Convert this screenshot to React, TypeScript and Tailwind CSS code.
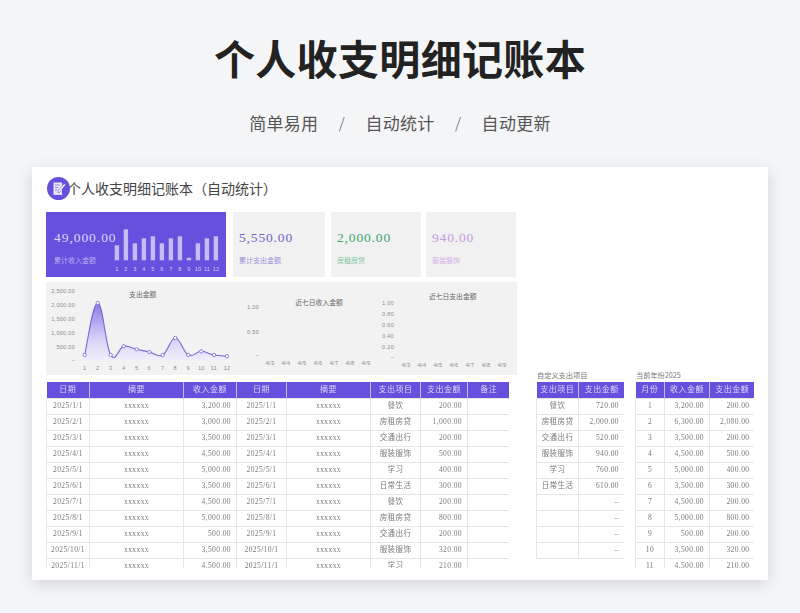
import React from "react";

const SANS = "font-['Noto_Sans_CJK_SC','Noto_Sans',sans-serif]";
const SERIF = "font-['Liberation_Serif','Noto_Sans_CJK_SC',serif]";

function DataTable({
  widths,
  headers,
  rows,
  aligns,
  noRight,
}: {
  widths: number[];
  headers: string[];
  rows: string[][];
  aligns: string[];
  noRight?: boolean;
}) {
  const total = widths.reduce((a, b) => a + b, 0);
  return (
    <div className="h-[186px] overflow-hidden shrink-0 will-change-transform" style={{ width: total }}>
      <table className={`table-fixed border-collapse w-full ${SERIF} text-[7.5px] tracking-[0.4px] text-[#7a7a7a]`}>
        <colgroup>
          {widths.map((w, i) => (
            <col key={i} style={{ width: w }} />
          ))}
        </colgroup>
        <thead>
          <tr className="h-[16px] bg-[#6750dd] text-[8px] text-[#dcd7fa] tracking-[0.5px]">
            {headers.map((h, i) => (
              <th key={i} className="font-normal p-0 border-r border-[#c3baf3] last:border-r-0">
                {h}
              </th>
            ))}
          </tr>
        </thead>
        <tbody>
          {rows.map((r, ri) => (
            <tr key={ri} className="h-[16px]">
              {r.map((c, ci) => (
                <td
                  key={ci}
                  className={`p-0 border border-[#e6e6e6] leading-none ${
                    aligns[ci] === "r" ? "text-right pr-[5px]" : "text-center"
                  } ${noRight && ci === r.length - 1 ? "border-r-0" : ""}`}
                >
                  {c}
                </td>
              ))}
            </tr>
          ))}
        </tbody>
      </table>
    </div>
  );
}

function Kpi({ value, label, w, valueCls, labelCls }: { value: string; label: string; w: string; valueCls: string; labelCls: string }) {
  return (
    <div className={`${w} h-[65px] bg-[#f1f1f1] pl-[6px] pt-[18px] shrink-0`}>
      <div className={`${SERIF} text-[13.5px] leading-[16px] tracking-[0.85px] ${valueCls}`}>{value}</div>
      <div className={`${SANS} text-[7px] leading-[10px] mt-[9px] ${labelCls}`}>{label}</div>
    </div>
  );
}

const barHeights = [15, 31, 17, 22, 24, 17, 22, 24, 2.5, 17, 22, 24];

function MiniBars() {
  return (
    <svg width="108" height="65" className="absolute left-[66px] top-0">
      {barHeights.map((h, i) => (
        <g key={i}>
          <rect x={2.7 + i * 9} y={48.3 - h} width="4.4" height={h} fill="#c5bcf6" />
          <text x={4.9 + i * 9} y={58.5} fontSize="5.5" textAnchor="middle" fill="#d6d0f9" fontFamily="Liberation Sans, sans-serif">
            {i + 1}
          </text>
        </g>
      ))}
    </svg>
  );
}

const pts: [number, number][] = [
  [38.7, 73], [51.7, 21], [64.7, 73], [77.7, 64.3], [90.7, 67.3], [103.3, 70],
  [116.7, 73], [129.3, 56], [142.3, 73], [155.3, 69.3], [168, 73], [181, 74.3],
];

function smooth(p: [number, number][]) {
  let d = `M${p[0][0]} ${p[0][1]}`;
  for (let i = 0; i < p.length - 1; i++) {
    const p0 = p[Math.max(0, i - 1)];
    const p1 = p[i];
    const p2 = p[i + 1];
    const p3 = p[Math.min(p.length - 1, i + 2)];
    const k = 0.2;
    const c1x = p1[0] + (p2[0] - p0[0]) * k;
    const c1y = p1[1] + (p2[1] - p0[1]) * k;
    const c2x = p2[0] - (p3[0] - p1[0]) * k;
    const c2y = p2[1] - (p3[1] - p1[1]) * k;
    d += ` C${c1x.toFixed(1)} ${c1y.toFixed(1)} ${c2x.toFixed(1)} ${c2y.toFixed(1)} ${p2[0]} ${p2[1]}`;
  }
  return d;
}

const AX = { fontFamily: "Liberation Sans, sans-serif", fontSize: 5.6, fill: "#8a8a8a", letterSpacing: 0.25 };
const TT = { fontFamily: "Noto Sans CJK SC, sans-serif", fontSize: 6.8, fill: "#666", textAnchor: "middle" as const };

function SpendChart() {
  const line = smooth(pts);
  const yl: [string, number][] = [["2,500.00", 11], ["2,000.00", 25], ["1,500.00", 39], ["1,000.00", 52.7], ["500.00", 66.7], ["–", 80]];
  return (
    <svg width="190" height="93" className="shrink-0">
      <defs>
        <linearGradient id="ar" x1="0" y1="0" x2="0" y2="1">
          <stop offset="0" stopColor="#8b7be9" />
          <stop offset="0.65" stopColor="#d9d4f7" />
          <stop offset="1" stopColor="#f0eefb" />
        </linearGradient>
      </defs>
      <text x="96.7" y="15" {...TT}>支出金额</text>
      {yl.map(([t, y]) => (
        <text key={t} x="29" y={y} textAnchor="end" {...AX}>{t}</text>
      ))}
      <path d={`${line} L181 78 L38.7 78 Z`} fill="url(#ar)" />
      <path d={line} fill="none" stroke="#7767d3" strokeWidth="1.1" />
      {pts.map(([x, y], i) => (
        <g key={i}>
          <circle cx={x} cy={y} r="1.7" fill="#fff" stroke="#7767d3" strokeWidth="0.8" />
          <text x={x} y="88" textAnchor="middle" {...AX}>{i + 1}</text>
        </g>
      ))}
    </svg>
  );
}

const days = ["4/3", "4/4", "4/5", "4/6", "4/7", "4/8", "4/9"];

function IncomeWeek() {
  return (
    <svg width="142" height="93" className="shrink-0">
      <text x="83" y="22.5" {...TT}>近七日收入金额</text>
      <text x="23" y="27" textAnchor="end" {...AX}>1.00</text>
      <text x="23" y="52" textAnchor="end" {...AX}>0.50</text>
      <text x="23" y="75" textAnchor="end" {...AX}>–</text>
      {days.map((d, i) => (
        <text key={d} x={34 + i * 16} y="83" textAnchor="middle" {...AX}>{d}</text>
      ))}
    </svg>
  );
}

function SpendWeek() {
  const yl: [string, number][] = [["1.00", 23], ["0.80", 34], ["0.60", 45], ["0.40", 56], ["0.20", 67], ["–", 77]];
  return (
    <svg width="139" height="93" className="shrink-0">
      <text x="74.7" y="17" {...TT}>近七日支出金额</text>
      {yl.map(([t, y]) => (
        <text key={t} x="16" y={y} textAnchor="end" {...AX}>{t}</text>
      ))}
      {days.map((d, i) => (
        <text key={d} x={28 + i * 16} y="85" textAnchor="middle" {...AX}>{d}</text>
      ))}
    </svg>
  );
}

const m = ["3,200.00", "3,000.00", "3,500.00", "4,500.00", "5,000.00", "3,500.00", "4,500.00", "5,000.00", "500.00", "3,500.00", "4,500.00"];
const cats = ["餐饮", "房租房贷", "交通出行", "服装服饰", "学习", "日常生活", "餐饮", "房租房贷", "交通出行", "服装服饰", "学习"];
const out = ["200.00", "1,000.00", "200.00", "500.00", "400.00", "300.00", "200.00", "800.00", "200.00", "320.00", "210.00"];

const mainRows = m.map((v, i) => {
  const d = `2025/${i + 1}/1`;
  return [d, "xxxxxx", v, d, "xxxxxx", cats[i], out[i], ""];
});

const customRows = [
  ["餐饮", "720.00"],
  ["房租房贷", "2,000.00"],
  ["交通出行", "520.00"],
  ["服装服饰", "940.00"],
  ["学习", "760.00"],
  ["日常生活", "610.00"],
  ["", "–"],
  ["", "–"],
  ["", "–"],
  ["", "–"],
];

const mIn = ["3,200.00", "6,300.00", "3,500.00", "4,500.00", "5,000.00", "3,500.00", "4,500.00", "5,000.00", "500.00", "3,500.00", "4,500.00"];
const mOut = ["200.00", "2,080.00", "200.00", "500.00", "400.00", "300.00", "200.00", "800.00", "200.00", "320.00", "210.00"];
const yearRows = mIn.map((v, i) => [String(i + 1), v, mOut[i]]);

export default function App() {
  return (
    <div className={`h-[613px] w-[800px] overflow-hidden bg-[#f4f5f7] flex flex-col items-center ${SANS}`}>
      <h1 className="mt-[30px] text-[41px] leading-[54px] font-bold text-[#222] tracking-[0.35px] text-center">个人收支明细记账本</h1>
      <div className="mt-[26px] flex items-center gap-[18px] text-[17px] leading-[26px] tracking-[0.3px] text-[#555]">
        <span>简单易用</span>
        <span className="w-[11px] text-center font-light text-[15px]">/</span>
        <span>自动统计</span>
        <span className="w-[11px] text-center font-light text-[15px]">/</span>
        <span>自动更新</span>
      </div>

      <div className="mt-[31px] w-[736px] h-[413px] shrink-0 bg-white shadow-[0_4px_14px_rgba(60,70,90,0.18)] pl-[14px] flex flex-col">
        <div className="h-[45px] flex items-center pb-[3px] shrink-0">
          <svg width="23" height="23" viewBox="0 0 23 23" className="ml-[1px] shrink-0 relative z-10">
            <circle cx="11.5" cy="11.5" r="11.5" fill="#6750dd" />
            <path d="M6.5 5.5h8.5v11.5h-8.5z" fill="#e9e6fb" />
            <path d="M8 8h5M8 10.5h3M8 13h2.5" stroke="#8d7de6" strokeWidth="0.9" />
            <path d="M17 6.5l1.6 1.2-5.6 7.3-2 .8.3-2.1z" fill="#fff" stroke="#6750dd" strokeWidth="0.6" />
            <path d="M6.5 17.5h9" stroke="#e9e6fb" strokeWidth="0.9" />
          </svg>
          <div className="-ml-[3px] text-[14px] leading-[20px] text-[#444] font-normal">个人收支明细记账本（自动统计）</div>
        </div>

        <div className="flex h-[356px] overflow-hidden">
          <div className="w-[471px] shrink-0 flex flex-col">
            <div className="flex h-[65px]">
              <div className="relative w-[180px] h-[65px] bg-[#6750dd] pl-[8px] pt-[18px] shrink-0">
                <div className={`${SERIF} text-[13.5px] leading-[16px] tracking-[0.95px] text-[#dcd8f8]`}>49,000.00</div>
                <div className="text-[7px] leading-[10px] mt-[9px] text-[#b9aff2]">累计收入金额</div>
                <MiniBars />
              </div>
              <div className="ml-[7px]">
                <Kpi w="w-[92px]" value="5,550.00" label="累计支出金额" valueCls="text-[#6f62c9]" labelCls="text-[#9a90da]" />
              </div>
              <div className="ml-[6px]">
                <Kpi w="w-[90px]" value="2,000.00" label="房租房贷" valueCls="text-[#3aa76f]" labelCls="text-[#7cc49e]" />
              </div>
              <div className="ml-[5px]">
                <Kpi w="w-[90px]" value="940.00" label="服装服饰" valueCls="text-[#c79ae0]" labelCls="text-[#d3b1e6]" />
              </div>
            </div>

            <div className="mt-[5px] h-[93px] bg-[#f2f2f2] flex shrink-0">
              <SpendChart />
              <IncomeWeek />
              <SpendWeek />
            </div>

            <div className="mt-[7px]">
              <DataTable
                widths={[43, 94, 53, 50, 84, 50, 47, 42]}
                headers={["日期", "摘要", "收入金额", "日期", "摘要", "支出项目", "支出金额", "备注"]}
                rows={mainRows}
                aligns={["c", "c", "r", "c", "c", "c", "r", "c"]}
              />
            </div>
          </div>

          <div className="ml-[19px] self-end flex gap-[11px]">
            <div>
              <div className="h-[11px] text-[7.2px] leading-[8px] text-[#777] pl-[1px] whitespace-nowrap">自定义支出项目</div>
              <DataTable
                widths={[42, 46]}
                headers={["支出项目", "支出金额"]}
                rows={customRows}
                aligns={["c", "r"]}
              />
            </div>
            <div>
              <div className="h-[11px] text-[7.2px] leading-[8px] text-[#777] pl-[1px] whitespace-nowrap">当前年份2025</div>
              <DataTable
                widths={[29, 45, 45]}
                headers={["月份", "收入金额", "支出金额"]}
                rows={yearRows}
                aligns={["c", "r", "r"]}
                noRight
              />
            </div>
          </div>
        </div>
      </div>
    </div>
  );
}
